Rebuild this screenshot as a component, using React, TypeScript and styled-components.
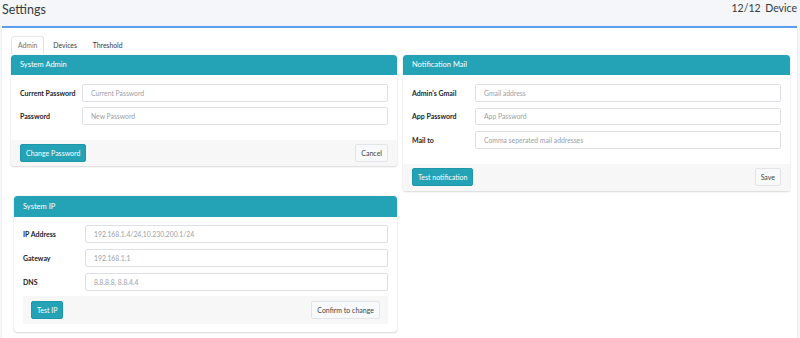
import React from "react";
import styled, { createGlobalStyle } from "styled-components";

const Global = createGlobalStyle`
  html, body { margin: 0; padding: 0; background: #f4f6f9; }
  body { font-family: Lato, "Liberation Sans", sans-serif; color: #212529; }
  * { box-sizing: border-box; }
`;

const Page = styled.div`
  width: 800px;
  height: 338px;
  overflow: hidden;
  background: #f4f6f9;
  padding: 0 3px 0 2px;
`;

const TopBar = styled.div`
  height: 26px;
  display: flex;
  justify-content: space-between;
  align-items: flex-start;
`;

const Title = styled.h1`
  margin: 0;
  padding-top: 2px;
  font-size: 12.5px;
  font-weight: 400;
  color: #343a40;
  line-height: 15px;
`;

const Count = styled.div`
  font-size: 10.5px;
  color: #343a40;
  padding-top: 2px;
  word-spacing: 2px;
`;

const MainCard = styled.div`
  background: #fff;
  border-top: 2px solid #5c9ded;
  height: 320px;
  padding: 8px 7px 0 9px;
  box-shadow: 0 0 1px rgba(0, 0, 0, 0.12);
`;

const Tabs = styled.ul`
  list-style: none;
  margin: 0 0 1px;
  padding: 0;
  display: flex;
  height: 18px;
`;

const Tab = styled.li<{ $active?: boolean }>`
  font-size: 6.8px;
  line-height: 17px;
  padding: 0 6px;
  color: ${(p) => (p.$active ? "#6c757d" : "#343a40")};
  border: 1px solid ${(p) => (p.$active ? "#e3e6ea" : "transparent")};
  border-bottom: none;
  border-radius: 3px 3px 0 0;
  background: #fff;
  & + & { margin-left: 2px; }
`;

const Columns = styled.div`
  display: grid;
  grid-template-columns: 386px 387px;
  column-gap: 6px;
  align-items: start;
`;

const Column = styled.div`
  display: flex;
  flex-direction: column;
  gap: 30px;
`;

const Card = styled.div<{ $indent?: number }>`
  background: #fff;
  border-radius: 3px;
  margin-left: ${(p) => p.$indent ?? 0}px;
  box-shadow: 0 0 1px rgba(0, 0, 0, 0.2), 0 1px 2px rgba(0, 0, 0, 0.14);
  overflow: hidden;
`;

const CardHeader = styled.div<{ $h: number }>`
  background: #24a2b6;
  color: #fff;
  font-size: 7.5px;
  height: ${(p) => p.$h}px;
  line-height: ${(p) => p.$h}px;
  padding: 0 9px;
  border-radius: 3px 3px 0 0;
`;

const CardBody = styled.div<{ $top: number; $bottom: number; $gap: number }>`
  padding: ${(p) => p.$top}px 9px ${(p) => p.$bottom}px 9px;
  display: flex;
  flex-direction: column;
  gap: ${(p) => p.$gap}px;
`;

const Row = styled.div<{ $label: number; $h: number }>`
  display: grid;
  grid-template-columns: ${(p) => p.$label}px 1fr;
  align-items: center;
  height: ${(p) => p.$h}px;
`;

const Label = styled.label`
  font-size: 7px;
  font-weight: 700;
  color: #212529;
`;

const Input = styled.input`
  height: 100%;
  width: 100%;
  border: 1px solid #dcdfe3;
  border-radius: 2px;
  padding: 0 8px;
  font-family: inherit;
  font-size: 6.8px;
  color: #495057;
  outline: none;
  &::placeholder { color: #9aa0a6; }
`;

const Footer = styled.div<{ $h: number; $inset?: boolean }>`
  background: #f7f7f7;
  display: flex;
  justify-content: space-between;
  align-items: center;
  height: ${(p) => p.$h}px;
  padding: 0 ${(p) => (p.$inset ? 8 : 9)}px;
  margin-top: ${(p) => (p.$inset ? -1 : 0)}px;
`;

const Button = styled.button<{ $primary?: boolean }>`
  height: 18px;
  padding: 0 5px;
  font-family: inherit;
  font-size: 7px;
  border-radius: 2px;
  cursor: pointer;
  color: ${(p) => (p.$primary ? "#fff" : "#444")};
  background: ${(p) => (p.$primary ? "#24a2b6" : "#f8f9fa")};
  border: 1px solid ${(p) => (p.$primary ? "#1f97aa" : "#e2e4e7")};
`;

type Field = { label: string; placeholder: string };

type Metrics = {
  header: number;
  top: number;
  bottom: number;
  gap: number;
  row: number;
  footer: number;
};

const FormCard: React.FC<{
  title: string;
  labelWidth: number;
  fields: Field[];
  primary: string;
  secondary: string;
  m: Metrics;
  inset?: boolean;
  indent?: number;
}> = ({ title, labelWidth, fields, primary, secondary, m, inset, indent }) => {
  const footer = (
    <Footer $h={m.footer} $inset={inset}>
      <Button $primary>{primary}</Button>
      <Button>{secondary}</Button>
    </Footer>
  );
  return (
    <Card $indent={indent}>
      <CardHeader $h={m.header}>{title}</CardHeader>
      <CardBody $top={m.top} $bottom={m.bottom} $gap={m.gap}>
        {fields.map((f) => (
          <Row key={f.label} $label={labelWidth} $h={m.row}>
            <Label>{f.label}</Label>
            <Input placeholder={f.placeholder} />
          </Row>
        ))}
        {inset && footer}
      </CardBody>
      {!inset && footer}
    </Card>
  );
};

export default function App() {
  return (
    <>
      <Global />
      <Page>
        <TopBar>
          <Title>Settings</Title>
          <Count>12/12 Device</Count>
        </TopBar>
        <MainCard>
          <Tabs>
            <Tab $active>Admin</Tab>
            <Tab>Devices</Tab>
            <Tab>Threshold</Tab>
          </Tabs>
          <Columns>
            <Column>
              <FormCard
                title="System Admin"
                labelWidth={62}
                m={{ header: 20, top: 9, bottom: 15, gap: 5, row: 18, footer: 26 }}
                fields={[
                  { label: "Current Password", placeholder: "Current Password" },
                  { label: "Password", placeholder: "New Password" },
                ]}
                primary="Change Password"
                secondary="Cancel"
              />
              <FormCard
                title="System IP"
                labelWidth={62}
                indent={3}
                inset
                m={{ header: 21, top: 8, bottom: 8, gap: 6, row: 18, footer: 28 }}
                fields={[
                  { label: "IP Address", placeholder: "192.168.1.4/24,10.230.200.1/24" },
                  { label: "Gateway", placeholder: "192.168.1.1" },
                  { label: "DNS", placeholder: "8.8.8.8, 8.8.4.4" },
                ]}
                primary="Test IP"
                secondary="Confirm to change"
              />
            </Column>
            <Column>
              <FormCard
                title="Notification Mail"
                labelWidth={63}
                m={{ header: 20, top: 9, bottom: 15, gap: 6, row: 17.5, footer: 27 }}
                fields={[
                  { label: "Admin's Gmail", placeholder: "Gmail address" },
                  { label: "App Password", placeholder: "App Password" },
                  { label: "Mail to", placeholder: "Comma seperated mail addresses" },
                ]}
                primary="Test notification"
                secondary="Save"
              />
            </Column>
          </Columns>
        </MainCard>
      </Page>
    </>
  );
}
